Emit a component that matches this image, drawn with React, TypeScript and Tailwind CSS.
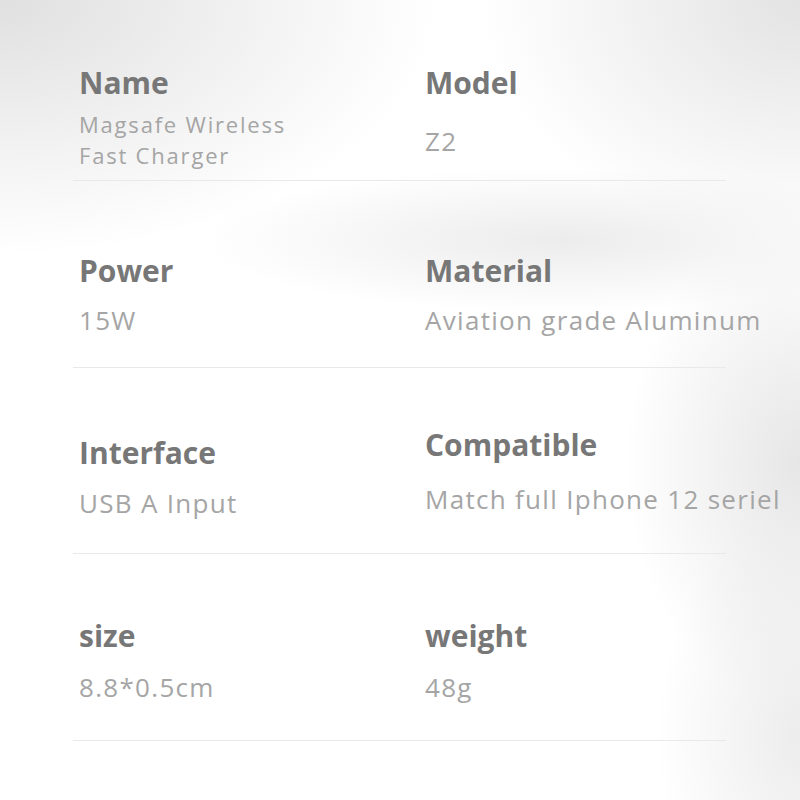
import React from 'react';

type Spec = { label: string; value: string[]; top: string; gap: string };

type Row = { height: string; left: Spec; right: Spec };

const rows: Row[] = [
  {
    height: 'h-[181px]',
    left: { label: 'Name', value: ['Magsafe Wireless', 'Fast Charger'], top: 'pt-[65px]', gap: 'mt-[8px]' },
    right: { label: 'Model', value: ['Z2'], top: 'pt-[65px]', gap: 'mt-[24px]' },
  },
  {
    height: 'h-[187px]',
    left: { label: 'Power', value: ['15W'], top: 'pt-[72px]', gap: 'mt-[15px]' },
    right: { label: 'Material', value: ['Aviation grade Aluminum'], top: 'pt-[72px]', gap: 'mt-[15px]' },
  },
  {
    height: 'h-[186px]',
    left: { label: 'Interface', value: ['USB A Input'], top: 'pt-[67px]', gap: 'mt-[16px]' },
    right: { label: 'Compatible', value: ['Match full Iphone 12 seriel'], top: 'pt-[59px]', gap: 'mt-[20px]' },
  },
  {
    height: 'h-[187px]',
    left: { label: 'size', value: ['8.8*0.5cm'], top: 'pt-[64px]', gap: 'mt-[17px]' },
    right: { label: 'weight', value: ['48g'], top: 'pt-[64px]', gap: 'mt-[17px]' },
  },
];

const SpecCell: React.FC<{ spec: Spec }> = ({ spec }) => {
  const multiline = spec.value.length > 1;
  return (
    <div className={`flex flex-col ${spec.top}`}>
      <div className="text-[30px] leading-[36px] font-bold text-[#777777]">{spec.label}</div>
      <div className={spec.gap}>
        {spec.value.map((line) => (
          <div
            key={line}
            className={
              multiline
                ? 'text-[22px] leading-[31px] tracking-[1.8px] text-[#a5a5a5] whitespace-nowrap'
                : 'text-[26px] leading-[32px] tracking-[1.3px] text-[#a5a5a5] whitespace-nowrap'
            }
          >
            {line}
          </div>
        ))}
      </div>
    </div>
  );
};

const App: React.FC = () => {
  return (
    <div className="w-[800px] h-[800px] overflow-hidden font-['Open_Sans','Noto_Sans',sans-serif] bg-white bg-[radial-gradient(ellipse_55%_32%_at_0%_0%,#e0e0e0,rgba(255,255,255,0)_100%),radial-gradient(ellipse_40%_30%_at_100%_0%,#e3e3e3,rgba(255,255,255,0)_100%),radial-gradient(ellipse_45%_9%_at_70%_30%,#ececec,rgba(255,255,255,0)_100%),radial-gradient(ellipse_22%_30%_at_100%_58%,#e6e6e6,rgba(255,255,255,0)_100%),radial-gradient(ellipse_18%_28%_at_100%_92%,#ececec,rgba(255,255,255,0)_100%)]">
      <div className="ml-[73px] w-[653px]">
        {rows.map((row) => (
          <div
            key={row.left.label}
            className={`grid grid-cols-[352px_1fr] border-b border-[#e9e9e9] ${row.height}`}
          >
            <div className="pl-[6px]">
              <SpecCell spec={row.left} />
            </div>
            <div>
              <SpecCell spec={row.right} />
            </div>
          </div>
        ))}
      </div>
    </div>
  );
};

export default App;
